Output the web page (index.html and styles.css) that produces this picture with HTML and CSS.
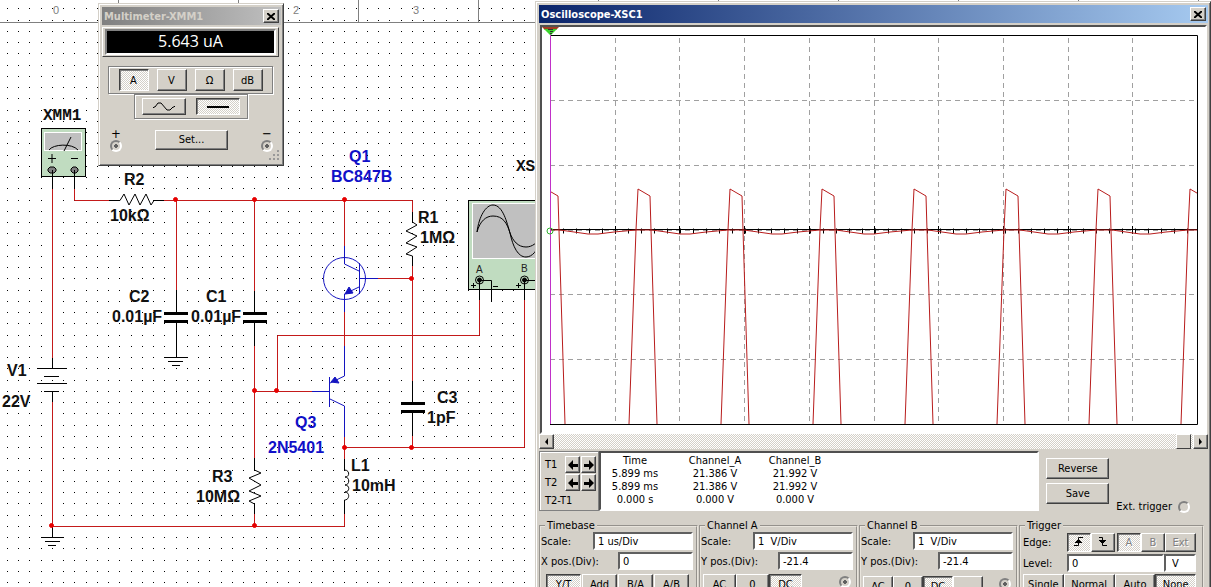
FILE: index.html
```html
<!DOCTYPE html>
<html lang="en">

<head>
    <meta charset="UTF-8">
    <title>Circuit</title>
    <link rel="stylesheet" href="styles.css">
</head>

<body>
    <main class="workspace">
        <svg class="schematic">
            <defs>
                <pattern id="dots" x="7" y="42" width="45" height="45" patternUnits="userSpaceOnUse">
                    <path fill="#000" d="M0 0h1v1h-1zM11 0h1v1h-1zM22 0h1v1h-1zM34 0h1v1h-1zM0 11h1v1h-1zM11 11h1v1h-1zM22 11h1v1h-1zM34 11h1v1h-1zM0 23h1v1h-1zM11 23h1v1h-1zM22 23h1v1h-1zM34 23h1v1h-1zM0 34h1v1h-1zM11 34h1v1h-1zM22 34h1v1h-1zM34 34h1v1h-1z" />
                </pattern>
            </defs>
            <rect width="100%" height="100%" fill="url(#dots)" />

            <!-- ruler -->
            <path class="ruler" d="M0 22.5H540M118.5 0V22M238.5 0V22M358.5 0V22M478.5 0V22M598.5 0V2M718.5 0V2M838.5 0V2M958.5 0V2M1078.5 0V2M1198.5 0V2" />
            <g class="ruler-text">
                <text x="53" y="14">0</text>
                <text x="293" y="14">2</text>
                <text x="413" y="14">3</text>
            </g>

            <!-- wires -->
            <g class="wire">
                <path d="M52.5 189V358M52.5 402V526.5H344.5V514M74.5 189V200.5H109M164 200.5H412.5V212" />
                <path d="M176.5 200V290M254.5 200V291M254.5 346V458M254.5 514V526M254 391.5H312M277.5 391V335.5H479.5V300" />
                <path d="M344.5 200V246M344.5 312V346M344.5 437V459M344 447.5H524.5V300M378 278.5H412M412.5 266V381M412.5 436V447" />
            </g>

            <!-- component leads and symbols -->
            <g class="part">
                <path d="M52.5 173V189M74.5 173V189M52.5 358V368M37 368.5H67M44 376.5H59M37 383.5H67M44 391.5H59M52.5 391V402" />
                <path d="M52.5 526V537M41 537.5H64M45 541.5H60M48 545.5H56" />
                <path d="M176.5 290V313M176.5 322V357M164 357.5H188M168 361.5H183M172 365.5H180" />
                <path d="M254.5 291V313M254.5 322V346M254.5 458V470M254.5 504V514" />
                <path d="M412.5 212V222M412.5 256V266M412.5 381V403M412.5 412V436M344.5 459V470M344.5 500V514" />
                <path d="M479.5 280V300M524.5 280V300M479 280.5H491.5V302M524 280.5H536" />
                <path d="M109 200.5H120L124 194L129 205L135 194L140 205L146 194L151 205L154 200.5H164" />
                <path d="M254.5 470L261 473L249 478L261 485L249 491L261 496L249 501L254.5 504" />
                <path d="M412.5 222L417 225L406 231L417 236L406 243L417 247L406 254L412.5 256" />
                <path d="M344.5 470C350 470 350 477 345 477C350 477 350 485 345 485C350 485 350 492 345 492C350 492 350 500 344.5 500" />
            </g>
            <g class="plate">
                <path d="M164 313.5H188M164 321.5H188M243 313.5H267M243 321.5H267M401 403.5H425M401 411.5H425" />
            </g>

            <!-- transistors -->
            <g class="transistor">
                <circle cx="344.5" cy="278.5" r="21" />
                <path d="M344.5 246V264L359 271M359.5 263V294M359 278.5H378M359 287L344.5 294V312" />
                <path d="M344.5 346V376L330 383M329.5 377V407M312 391.5H329M330 399L344.5 406V437" />
                <path class="arrow" d="M349 287L353 293L345 294ZM331 382L335 377L339 383Z" />
            </g>

            <g class="node">
                <circle cx="175.5" cy="199.5" r="2" />
                <circle cx="254.5" cy="199.5" r="2" />
                <circle cx="344.5" cy="199.5" r="2" />
                <circle cx="411.5" cy="278.5" r="2" />
                <circle cx="254.5" cy="390.5" r="2" />
                <circle cx="276.5" cy="390.5" r="2" />
                <circle cx="344.5" cy="447.5" r="2" />
                <circle cx="411.5" cy="447.5" r="2" />
                <circle cx="51.5" cy="525.5" r="2" />
                <circle cx="254.5" cy="525.5" r="2" />
            </g>

            <!-- multimeter icon -->
            <rect class="device" x="41.5" y="128.5" width="44" height="48" />
            <rect class="device-screen" x="44.5" y="132.5" width="37" height="18" />
            <g class="part">
                <path d="M49 150C53 144 72 143 78 150M64 151L71 137M48 158.5H56M52 154V163M71 158.5H78" />
                <path class="terminal" d="M50 167h4l2 2v2l-2 2h-4l-2 -2v-2zM73 167h3l2 2v2l-2 2h-3l-2 -2v-2z" />
                <path d="M52.5 170V177M74.5 170V177" />
            </g>

            <!-- oscilloscope icon -->
            <rect class="device" x="468.5" y="200.5" width="90" height="89" />
            <rect class="device-screen" x="472.5" y="203.5" width="80" height="55" />
            <g class="part">
                <path d="M477 232C479 216 486 205 493 205C503 205 507 223 510 233C513 247 518 257 526 257C532 257 538 251 541 238" />
                <path d="M477 232C480 221 486 216 493 216C503 216 507 223 510 233C513 241 518 247 526 247C532 247 538 243 541 235" />
                <path d="M471 285.5H476M473.5 283V288M493 286.5H498M516 285.5H521M518.5 283V288" />
                <path d="M479.5 280V290M524.5 280V290M479 280.5H491.5V290M524 280.5H536" />
                <circle cx="479.5" cy="280" r="4" />
                <circle cx="524.5" cy="280" r="4" />
                <circle class="dot" cx="479.5" cy="280" r="2" />
                <circle class="dot" cx="524.5" cy="280" r="2" />
            </g>
            <text class="port" x="476" y="273">A</text>
            <text class="port" x="521" y="272">B</text>

            <g class="instrument-name">
                <text x="43" y="120">XMM1</text>
                <text x="516" y="171">XSC1</text>
            </g>
            <g class="label">
                <text x="124" y="185">R2</text>
                <text x="110" y="221">10kΩ</text>
                <text x="129" y="302">C2</text>
                <text x="112" y="322">0.01µF</text>
                <text x="206" y="302">C1</text>
                <text x="191" y="322">0.01µF</text>
                <text x="7" y="376">V1</text>
                <text x="2" y="407">22V</text>
                <text x="212" y="482">R3</text>
                <text x="196" y="502">10MΩ</text>
                <text x="418" y="223">R1</text>
                <text x="420" y="243">1MΩ</text>
                <text x="437" y="403">C3</text>
                <text x="427" y="423">1pF</text>
                <text x="351" y="471">L1</text>
                <text x="352" y="491">10mH</text>
            </g>
            <g class="label blue">
                <text x="349" y="162">Q1</text>
                <text x="331" y="182">BC847B</text>
                <text x="295" y="428">Q3</text>
                <text x="268" y="453">2N5401</text>
            </g>
        </svg>

        <section class="window multimeter">
            <header class="titlebar inactive">
                <h2>Multimeter-XMM1</h2>
                <button class="close" aria-label="Close"><svg width="8" height="7"><path d="M0 0L8 7M8 0L0 7" /></svg></button>
            </header>
            <div class="display"><output>5.643 uA</output></div>
            <div class="modes">
                <button class="btn pressed">A</button>
                <button class="btn">V</button>
                <button class="btn">Ω</button>
                <button class="btn">dB</button>
            </div>
            <div class="signal">
                <button class="btn" aria-label="AC"><svg width="24" height="10"><path d="M1 6L2 5H3L6 1H9L15 8H18L21 5H22L23 4" /></svg></button>
                <button class="btn pressed" aria-label="DC"><svg width="24" height="10"><path class="thick" d="M1 5H23" /></svg></button>
            </div>
            <footer class="terminals">
                <label>+<input type="radio" name="plus" checked></label>
                <button class="btn">Set...</button>
                <label>−<input type="radio" name="minus" checked></label>
            </footer>
            <svg class="grip" width="12" height="12"><path d="M9 0h2v2h-2zM5 4h2v2h-2zM9 4h2v2h-2zM1 8h2v2h-2zM5 8h2v2h-2zM9 8h2v2h-2z" /></svg>
        </section>

        <section class="window scope">
            <header class="titlebar">
                <h2>Oscilloscope-XSC1</h2>
                <button class="close" aria-label="Close"><svg width="8" height="7"><path d="M0 0L8 7M8 0L0 7" /></svg></button>
            </header>

            <div class="plot">
                <svg viewBox="-8 -8 663 405">
                    <defs>
                        <g id="pulse">
                            <path d="M-9 389L-2 195L0 154L12 161L13 195L19 389" />
                            <path d="M-2 195H14L28 197L42 199H52L68 197L90 195" />
                        </g>
                        <clipPath id="area"><rect x="0" y="0" width="647" height="389" /></clipPath>
                    </defs>
                    <path class="grid-lines" d="M65.5 3V389M129.5 3V389M194.5 3V389M259.5 3V389M324.5 3V389M388.5 3V389M453.5 3V389M518.5 3V389M582.5 3V389M0 65.5H647M0 130.5H647M0 195.5H647M0 259.5H647M0 324.5H647" />
                    <path class="frame" d="M0 .5H647.5V389.5H0M0 194.5H647" />
                    <path class="ticks" d="M13 196H647" />
                    <path class="frame" d="M65.5 191V199M129.5 191V199M194.5 191V199M259.5 191V199M324.5 191V199M388.5 191V199M453.5 191V199M518.5 191V199M582.5 191V199" />
                    <g class="trace" clip-path="url(#area)">
                        <use href="#pulse" x="-4" />
                        <use href="#pulse" x="88" />
                        <use href="#pulse" x="180" />
                        <use href="#pulse" x="272" />
                        <use href="#pulse" x="364" />
                        <use href="#pulse" x="456" />
                        <use href="#pulse" x="548" />
                        <use href="#pulse" x="640" />
                    </g>
                    <path class="cursor" d="M.5 0V389" />
                    <circle class="origin" cx="0" cy="196" r="3" />
                    <path fill="#a33d22" d="M-8 -8H9L6 -5H-5Z" />
                    <path fill="#3ad52c" d="M-6 -6H7L1 0H0Z" />
                    <path stroke="#333" d="M-2 -5.5H3M0 -3.5H3M0 -1.5H2" />
                </svg>
            </div>
            <div class="scrollbar">
                <button class="btn" aria-label="Scroll left"><svg width="5" height="7"><path d="M4 0V7L1 4Z" /></svg></button>
                <span class="thumb"></span>
                <button class="btn" aria-label="Scroll right"><svg width="5" height="7"><path d="M1 0V7L4 4Z" /></svg></button>
            </div>

            <div class="readout">
                <div class="cursors">
                    <span>T1</span>
                    <button class="btn" aria-label="T1 left"><svg width="10" height="10"><path d="M0 5L5 0V4H10V7H5V10Z" /></svg></button>
                    <button class="btn" aria-label="T1 right"><svg width="10" height="10"><path d="M10 5L5 0V4H0V7H5V10Z" /></svg></button>
                    <span>T2</span>
                    <button class="btn" aria-label="T2 left"><svg width="10" height="10"><path d="M0 5L5 0V4H10V7H5V10Z" /></svg></button>
                    <button class="btn" aria-label="T2 right"><svg width="10" height="10"><path d="M10 5L5 0V4H0V7H5V10Z" /></svg></button>
                    <span class="diff">T2-T1</span>
                </div>
                <div class="values">
                    <table>
                        <tr><th>Time</th><th>Channel_A</th><th>Channel_B</th></tr>
                        <tr><td>5.899 ms</td><td>21.386 V</td><td>21.992 V</td></tr>
                        <tr><td>5.899 ms</td><td>21.386 V</td><td>21.992 V</td></tr>
                        <tr><td>0.000 s</td><td>0.000 V</td><td>0.000 V</td></tr>
                    </table>
                </div>
                <div class="actions">
                    <button class="btn">Reverse</button>
                    <button class="btn">Save</button>
                </div>
                <label class="ext">Ext. trigger <input type="radio" name="ext"></label>
            </div>

            <div class="groups">
                <fieldset>
                    <legend>Timebase</legend>
                    <div class="row"><label for="tb-scale">Scale:</label><input class="wide" id="tb-scale" value="1 us/Div"></div>
                    <div class="row"><label for="tb-pos">X pos.(Div):</label><input id="tb-pos" value="0"></div>
                    <div class="buttons timebase">
                        <button class="btn pressed">Y/T</button>
                        <button class="btn">Add</button>
                        <button class="btn">B/A</button>
                        <button class="btn">A/B</button>
                    </div>
                </fieldset>
                <fieldset>
                    <legend>Channel A</legend>
                    <div class="row"><label for="a-scale">Scale:</label><input class="wide" id="a-scale" value="1  V/Div"></div>
                    <div class="row"><label for="a-pos">Y pos.(Div):</label><input id="a-pos" value="-21.4"></div>
                    <div class="buttons channel">
                        <button class="btn">AC</button>
                        <button class="btn">0</button>
                        <button class="btn pressed">DC</button>
                        <input type="radio" name="in-a" aria-label="Channel A input" checked>
                    </div>
                </fieldset>
                <fieldset>
                    <legend>Channel B</legend>
                    <div class="row"><label for="b-scale">Scale:</label><input class="wide" id="b-scale" value="1  V/Div"></div>
                    <div class="row"><label for="b-pos">Y pos.(Div):</label><input id="b-pos" value="-21.4"></div>
                    <div class="buttons channel low">
                        <button class="btn">AC</button>
                        <button class="btn">0</button>
                        <button class="btn pressed">DC</button>
                        <button class="btn">-</button>
                        <input type="radio" name="in-b" aria-label="Channel B input" checked>
                    </div>
                </fieldset>
                <fieldset class="trigger">
                    <legend>Trigger</legend>
                    <div class="row edge">
                        <span>Edge:</span>
                        <button class="btn pressed" aria-label="Rising edge"><svg width="10" height="10"><path d="M0 8.5H4.5V.5H9M1 5.5H8M2 4.5H7M3 3.5H6" /></svg></button>
                        <button class="btn" aria-label="Falling edge"><svg width="10" height="10"><path d="M1 .5H4.5V8.5H9M1 3.5H8M2 4.5H7M3 5.5H6" /></svg></button>
                        <button class="btn pressed source" disabled>A</button>
                        <button class="btn" disabled>B</button>
                        <button class="btn ext-btn" disabled>Ext</button>
                    </div>
                    <div class="row level"><label for="level">Level:</label><input id="level" value="0"><input class="unit" aria-label="Level unit" value="V"></div>
                    <div class="buttons modes-row">
                        <button class="btn">Single</button>
                        <button class="btn normal">Normal</button>
                        <button class="btn">Auto</button>
                        <button class="btn pressed">None</button>
                    </div>
                </fieldset>
            </div>
        </section>
    </main>
</body>

</html>
```
FILE: styles.css
```css
* {
    box-sizing: border-box;
}

body {
    margin: 0;
    font-family: Tahoma, "DejaVu Sans Condensed", "DejaVu Sans", sans-serif;
    font-size: 11px;
    line-height: 13px;
    color: #000;
}

.workspace {
    position: relative;
    height: 100vh;
    overflow: hidden;
    background: #fff;
}

button,
input {
    font: inherit;
    color: inherit;
    margin: 0;
}

/* schematic */

.schematic {
    display: block;
    width: 100%;
    height: 100%;
    fill: none;
}

.ruler {
    stroke: #808080;
}

.ruler-text,
.port {
    font-family: "Liberation Sans", Arial, sans-serif;
    font-size: 11px;
    fill: #808080;
}

.port {
    font-size: 10px;
    fill: #222;
}

.wire {
    stroke: #c41a1a;
}

.part {
    stroke: #000;
}

.plate {
    stroke: #000;
    stroke-width: 3;
}

.transistor {
    stroke: #1414c0;
}

.transistor .arrow {
    fill: #1414c0;
}

.node {
    fill: #e60000;
    stroke: #e60000;
}

.device {
    fill: #c0dcc0;
    stroke: #000;
}

.device-screen {
    fill: #c0c0c0;
    stroke: #fff;
}

.terminal {
    fill: #808080;
}

.dot {
    fill: #000;
}

.label {
    font-family: "Liberation Sans", Arial, sans-serif;
    font-weight: bold;
    font-size: 16px;
    fill: #111;
}

.blue {
    fill: #1010c8;
}

.instrument-name {
    font-family: "Liberation Mono", "Courier New", monospace;
    font-weight: bold;
    font-size: 16px;
    fill: #111;
}

/* windows */

.window {
    position: absolute;
    padding: 2px;
    background: #d4d0c8;
    border: 1px solid;
    border-color: #d4d0c8 #404040 #404040 #d4d0c8;
    box-shadow: inset 1px 1px #fff, inset -1px -1px #808080;
}

.titlebar {
    display: flex;
    align-items: center;
    justify-content: space-between;
    height: 18px;
    margin: 1px 0 1px 1px;
    padding: 0 2px;
    color: #fff;
    background: linear-gradient(to right, #0a246a, #a6caf0);
}

.titlebar.inactive {
    color: #d4d0c8;
    background: linear-gradient(to right, #808080, #c0c0c0);
}

.titlebar h2 {
    margin: 0;
    font-size: 11px;
    font-weight: bold;
}

.btn,
.close {
    display: flex;
    align-items: center;
    justify-content: center;
    padding: 0;
    background: #d4d0c8;
    border: 1px solid;
    border-color: #fff #404040 #404040 #fff;
    border-radius: 0;
    box-shadow: inset -1px -1px #808080;
}

.close {
    width: 16px;
    height: 14px;
}

.close path {
    stroke: #000;
    stroke-width: 2;
}

.btn.pressed {
    border-color: #404040 #fff #fff #404040;
    box-shadow: inset 1px 1px #808080;
}

.btn.pressed,
.scrollbar {
    background: repeating-conic-gradient(#fff 0 25%, #d4d0c8 0 50%) 0 0 / 2px 2px;
}

.btn:disabled {
    color: #808080;
    text-shadow: 1px 1px #fff;
}

input[type="radio"] {
    appearance: none;
    width: 12px;
    height: 12px;
    border: 2px solid;
    border-color: #808080 #fff #fff #808080;
    border-radius: 50%;
}

input[type="radio"]:checked {
    background: radial-gradient(circle, #606060 0 2px, transparent 2px);
}

/* multimeter */

.multimeter {
    left: 98px;
    top: 3px;
    width: 186px;
    height: 163px;
}

.display {
    margin: 2px 2px 0 1px;
    padding: 1px 2px;
    border: 1px solid;
    border-color: #fff #404040 #404040 #fff;
}

.display output {
    display: block;
    height: 26px;
    line-height: 20px;
    font-family: "Open Sans", sans-serif;
    font-size: 16px;
    text-align: center;
    color: #fff;
    background: #000;
    border: 2px solid;
    border-color: #808080 #fff #fff #808080;
}

.modes,
.signal {
    display: flex;
    align-items: center;
    justify-content: center;
    border: 1px solid #808080;
    box-shadow: inset 1px 1px #fff, 1px 1px #fff;
}

.modes {
    gap: 8px;
    height: 28px;
    margin: 9px 8px 0 7px;
}

.modes .btn {
    width: 30px;
    height: 22px;
}

.signal {
    gap: 10px;
    width: 114px;
    height: 25px;
    margin: 0 auto;
}

.signal .btn {
    width: 44px;
    height: 17px;
}

.signal path {
    fill: none;
    stroke: #000;
}

.signal .thick {
    stroke-width: 2;
}

.terminals {
    display: flex;
    justify-content: space-between;
    align-items: center;
    padding: 8px 8px 0 9px;
}

.terminals label {
    display: flex;
    flex-direction: column;
    align-items: center;
    font-size: 13px;
}

.terminals .btn {
    width: 73px;
    height: 20px;
}

.grip {
    position: absolute;
    right: 3px;
    bottom: 3px;
    fill: #999;
}

/* oscilloscope */

.scope {
    left: 535px;
    right: 0;
    top: 1px;
}

.plot {
    margin: 2px 1px 0 2px;
    border: 2px solid;
    border-color: #505050 #fff #fff #505050;
    background: #fff;
}

.plot svg {
    display: block;
    width: 100%;
    fill: none;
}

.grid-lines {
    stroke: #a0a0a0;
    stroke-dasharray: 5 4;
}

.frame {
    stroke: #000;
}

.ticks {
    stroke: #000;
    stroke-width: 5;
    stroke-dasharray: 1 12;
}

.trace {
    stroke: #b81c1c;
}

.cursor {
    stroke: #c030c8;
}

.origin {
    stroke: #30b030;
}

.scrollbar {
    display: flex;
    height: 15px;
    margin-left: 1px;
}

.scrollbar .btn,
.thumb {
    width: 15px;
}

.thumb {
    margin-left: auto;
    margin-right: 2px;
    background: #d4d0c8;
    border: 1px solid;
    border-color: #fff #404040 #404040 #fff;
}

.readout {
    display: flex;
    height: 60px;
    margin: 2px 0 0 1px;
}

.cursors {
    display: grid;
    grid-template-columns: 19px 15px 15px;
    grid-template-rows: 17px 17px 16px;
    column-gap: 1px;
    row-gap: 1px;
    align-items: center;
    width: 60px;
    padding: 4px 0 0 5px;
    border: 1px solid #808080;
    box-shadow: inset 1px 1px #fff;
}

.cursors .btn {
    height: 17px;
}

.diff {
    grid-column: 1 / 4;
}

.values {
    flex: 1;
    background: #fff;
    border: 2px solid;
    border-color: #505050 #fff #fff #505050;
}

.values table {
    width: 240px;
    table-layout: fixed;
    border-collapse: collapse;
    text-align: center;
    margin-top: 1px;
    margin-left: -6px;
}

.values th,
.values td {
    padding: 0;
    font-weight: normal;
}

.actions {
    display: flex;
    flex-direction: column;
    gap: 4px;
    padding: 7px;
}

.actions .btn {
    width: 63px;
    height: 24px;
}

.ext {
    display: flex;
    align-items: center;
    gap: 6px;
    align-self: flex-end;
    margin-right: 18px;
    height: 9px;
}

.groups {
    display: grid;
    grid-template-columns: 159fr 159fr 159fr 185fr;
    gap: 1px;
    margin: 8px 4px 0 1px;
}

fieldset {
    min-width: 0;
    margin: 0;
    padding: 0 3px 4px 0;
    border: 2px groove #e8e4dc;
}

legend {
    margin-left: 4px;
    padding: 0 2px;
}

.row {
    display: flex;
    align-items: center;
    justify-content: space-between;
    height: 18px;
    margin-bottom: 2px;
}

.row input {
    width: 75px;
    height: 18px;
    padding: 0 3px;
    border: 2px solid;
    border-color: #606060 #fff #fff #606060;
    border-radius: 0;
    background: #fff;
}

.row .wide {
    width: 100px;
}

.buttons {
    display: flex;
    margin-top: 4px;
    height: 20px;
}

.buttons .btn {
    height: 20px;
}

.timebase {
    padding-left: 5px;
    gap: 1px;
}

.timebase .btn {
    width: 35px;
}

.channel {
    padding-left: 2px;
}

.channel .btn {
    width: 33px;
}

.channel input {
    margin: 2px 2px 0 auto;
}

.channel.low {
    margin-top: 6px;
}

.low .btn {
    width: 30px;
}

.trigger {
    padding-right: 6px;
}

.trigger .row {
    padding-left: 2px;
}

.trigger .edge {
    height: 20px;
}

.edge .btn {
    width: 24px;
    height: 19px;
}

.edge span {
    flex: 1;
}

.edge .source {
    margin-left: 2px;
}

.edge .ext-btn {
    width: 31px;
}

.edge path {
    fill: none;
    stroke: #000;
}

.level label {
    flex: 1;
}

.level #level {
    width: 97px;
}

.level .unit {
    width: 32px;
    padding-left: 6px;
}

.modes-row {
    margin-top: 0;
    padding-left: 2px;
}

.modes-row .btn {
    flex: 1;
}

.modes-row .normal {
    flex: 0 0 51px;
}
```
